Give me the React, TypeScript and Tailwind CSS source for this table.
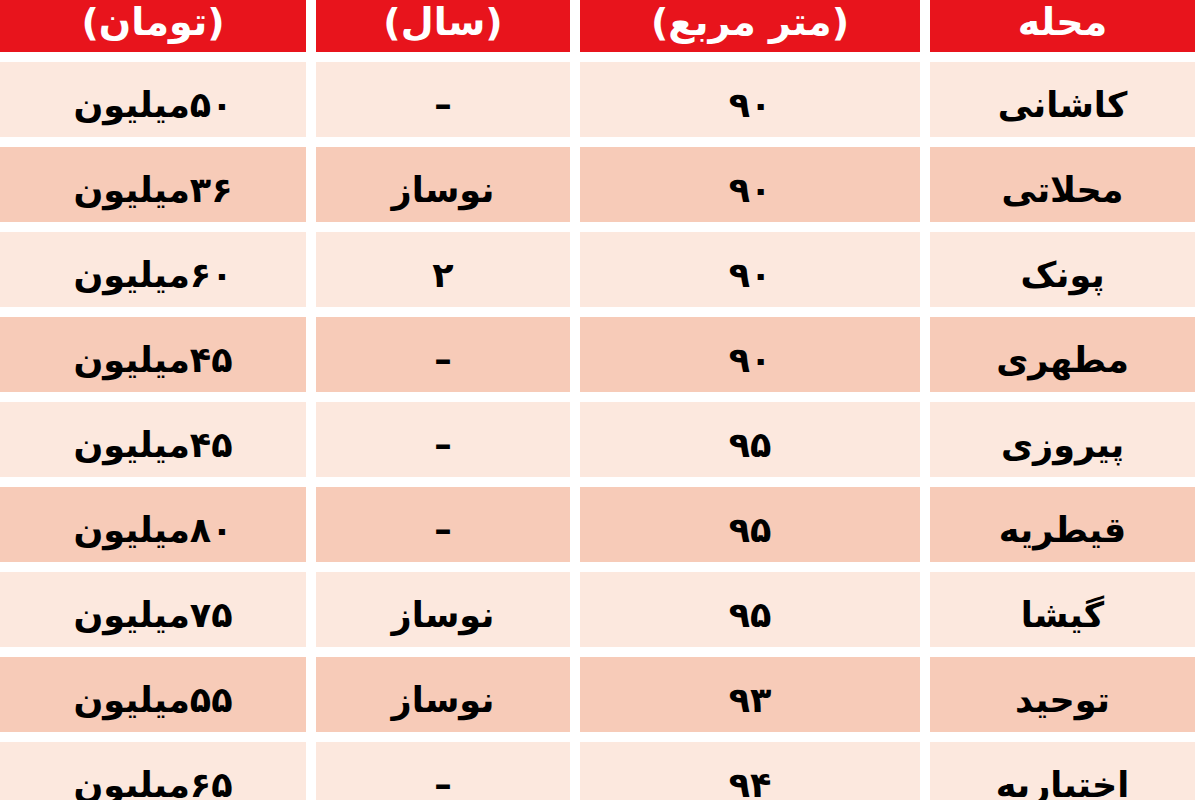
import React from 'react';

type Row = {
  area: string;
  size: string;
  age: string;
  price: string;
};

const rows: Row[] = [
  { area: 'کاشانی', size: '۹۰', age: '–', price: '۵۰میلیون' },
  { area: 'محلاتی', size: '۹۰', age: 'نوساز', price: '۳۶میلیون' },
  { area: 'پونک', size: '۹۰', age: '۲', price: '۶۰میلیون' },
  { area: 'مطهری', size: '۹۰', age: '–', price: '۴۵میلیون' },
  { area: 'پیروزی', size: '۹۵', age: '–', price: '۴۵میلیون' },
  { area: 'قیطریه', size: '۹۵', age: '–', price: '۸۰میلیون' },
  { area: 'گیشا', size: '۹۵', age: 'نوساز', price: '۷۵میلیون' },
  { area: 'توحید', size: '۹۳', age: 'نوساز', price: '۵۵میلیون' },
  { area: 'اختیاریه', size: '۹۴', age: '–', price: '۶۵میلیون' },
];

const headers = ['محله', '(متر مربع)', '(سال)', '(تومان)'];

const Cell = ({ children, pink }: { children: React.ReactNode; pink: boolean }) => (
  <div
    className={`h-[75px] flex items-center justify-center pt-[12px] text-[35px] font-bold text-black ${
      pink ? 'bg-[#f7cbb8]' : 'bg-[#fce8de]'
    }`}
  >
    {children}
  </div>
);

export default function App() {
  return (
    <div
      dir="rtl"
      className="w-[1200px] h-[800px] overflow-hidden bg-white pr-[5px]"
      style={{ fontFamily: '"DejaVu Sans", sans-serif' }}
    >
      <div className="grid grid-cols-[265px_340px_254px_306px] gap-x-[10px] gap-y-[10px]">
        {headers.map((h) => (
          <div
            key={h}
            className="h-[52px] bg-[#e8141c] flex items-start justify-center text-white text-[38px] font-bold leading-[44px]"
          >
            {h}
          </div>
        ))}
        {rows.map((r, i) => {
          const pink = i % 2 === 1;
          return (
            <React.Fragment key={r.area}>
              <Cell pink={pink}>{r.area}</Cell>
              <Cell pink={pink}>{r.size}</Cell>
              <Cell pink={pink}>{r.age}</Cell>
              <Cell pink={pink}>{r.price}</Cell>
            </React.Fragment>
          );
        })}
      </div>
    </div>
  );
}
